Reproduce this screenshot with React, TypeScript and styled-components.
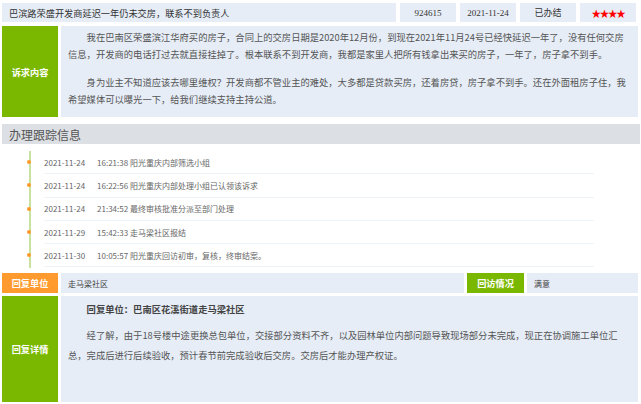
import styled, { createGlobalStyle } from "styled-components";

const GlobalStyle = createGlobalStyle`
  html, body {
    margin: 0;
    padding: 0;
    background: #ffffff;
    font-family: "Noto Sans CJK SC", "Noto Sans", sans-serif;
  }
`;

const Page = styled.div`
  width: 641px;
  padding: 3px 3px 0 2px;
  box-sizing: border-box;
`;

const Row = styled.div<{ $h: number; $mt?: number }>`
  display: flex;
  gap: 3px;
  height: ${(p) => p.$h}px;
  margin-top: ${(p) => p.$mt ?? 0}px;
`;

const TopRow = styled(Row)`
  gap: 4px;
  padding-right: 2px;
`;

const Cell = styled.div<{ $w?: number }>`
  background: #e6edf7;
  display: flex;
  align-items: center;
  box-sizing: border-box;
  ${(p) => (p.$w ? `width: ${p.$w}px; flex: none;` : "flex: 1;")}
`;

const TitleCell = styled(Cell)`
  padding-left: 7px;
  font-size: 9.2px;
  color: #333;
`;

const MetaCell = styled(Cell)`
  justify-content: center;
  font-family: "Liberation Serif", "Noto Sans CJK SC", serif;
  font-size: 9px;
  color: #333;
`;

const Stars = styled(MetaCell)`
  color: #ff0000;
  font-size: 9.5px;
  letter-spacing: -1.2px;
`;

const Label = styled.div<{ $color: string; $w?: number }>`
  width: ${(p) => p.$w ?? 56}px;
  flex: none;
  background: ${(p) => p.$color};
  color: #fff;
  font-size: 9.2px;
  font-weight: 700;
  display: flex;
  align-items: center;
  justify-content: center;
`;

const Body = styled.div<{ $lh?: number }>`
  flex: 1;
  background: #e6edf7;
  padding: 3px 6px 0 7px;
  box-sizing: border-box;
  font-size: 9.3px;
  line-height: ${(p) => p.$lh ?? 17}px;
  color: #555;
`;

const Para = styled.p<{ $bold?: boolean; $gap?: number }>`
  margin: 0 0 ${(p) => p.$gap ?? 11}px;
  text-indent: 2em;
  ${(p) => (p.$bold ? "font-weight: 700; color: #444;" : "")}
`;

const SectionHead = styled.div`
  margin-top: 7px;
  height: 20px;
  margin-right: -2px;
  background: #dcdfe3;
  display: flex;
  align-items: center;
  padding-left: 7px;
  font-size: 12px;
  color: #555;
`;

const Timeline = styled.div`
  margin: 7px 0 0 27px;
  border-left: 2px solid #c8e3a0;
  padding-left: 13px;
  padding-bottom: 1px;
`;

const Step = styled.div`
  position: relative;
  width: 550px;
  height: 23.3px;
  box-sizing: border-box;
  border-bottom: 1.5px solid #eef3fa;
  display: flex;
  align-items: center;
  gap: 12px;
  font-size: 8px;
  color: #666;

  &::before {
    content: "";
    position: absolute;
    left: -17px;
    top: 50%;
    width: 4px;
    height: 4px;
    margin-top: -2px;
    border-radius: 50%;
    background: #ff9a2e;
  }
`;

const Small = styled(Cell)`
  padding-left: 7px;
  font-size: 8px;
  color: #444;
`;

const steps = [
  ["2021-11-24", "16:21:38 阳光重庆内部筛选小组"],
  ["2021-11-24", "16:22:56 阳光重庆内部处理小组已认领该诉求"],
  ["2021-11-24", "21:34:52 最终审核批准分派至部门处理"],
  ["2021-11-29", "15:42:33 走马梁社区报结"],
  ["2021-11-30", "10:05:57 阳光重庆回访初审，复核，终审结案。"],
];

export default function App() {
  return (
    <Page>
      <GlobalStyle />
      <TopRow $h={19}>
        <TitleCell>巴滨路荣盛开发商延迟一年仍未交房，联系不到负责人</TitleCell>
        <MetaCell $w={56}>924615</MetaCell>
        <MetaCell $w={56}>2021-11-24</MetaCell>
        <MetaCell $w={56}>已办结</MetaCell>
        <Stars $w={56}>★★★★</Stars>
      </TopRow>
      <Row $h={91} $mt={4}>
        <Label $color="#7ab800">诉求内容</Label>
        <Body>
          <Para>
            我在巴南区荣盛滨江华府买的房子，合同上的交房日期是2020年12月份，到现在2021年11月24号已经快延迟一年了，没有任何交房信息，开发商的电话打过去就直接挂掉了。根本联系不到开发商，我都是家里人把所有钱拿出来买的房子，一年了，房子拿不到手。
          </Para>
          <Para>
            身为业主不知道应该去哪里维权？开发商都不管业主的难处，大多都是贷款买房，还着房贷，房子拿不到手。还在外面租房子住，我希望媒体可以曝光一下，给我们继续支持主持公道。
          </Para>
        </Body>
      </Row>
      <SectionHead>办理跟踪信息</SectionHead>
      <Timeline>
        {steps.map(([d, t]) => (
          <Step key={t}>
            <span>{d}</span>
            <span>{t}</span>
          </Step>
        ))}
      </Timeline>
      <Row $h={20} $mt={5}>
        <Label $color="#ff9a2e">回复单位</Label>
        <Small>走马梁社区</Small>
        <Label $color="#7ab800" $w={57}>回访情况</Label>
        <Small $w={111}>满意</Small>
      </Row>
      <Row $h={106} $mt={3}>
        <Label $color="#7ab800">回复详情</Label>
        <Body $lh={20}>
          <Para $bold $gap={6}>回复单位：巴南区花溪街道走马梁社区</Para>
          <Para>
            经了解，由于18号楼中途更换总包单位，交接部分资料不齐，以及园林单位内部问题导致现场部分未完成，现正在协调施工单位汇总，完成后进行后续验收，预计春节前完成验收后交房。交房后才能办理产权证。
          </Para>
        </Body>
      </Row>
    </Page>
  );
}
